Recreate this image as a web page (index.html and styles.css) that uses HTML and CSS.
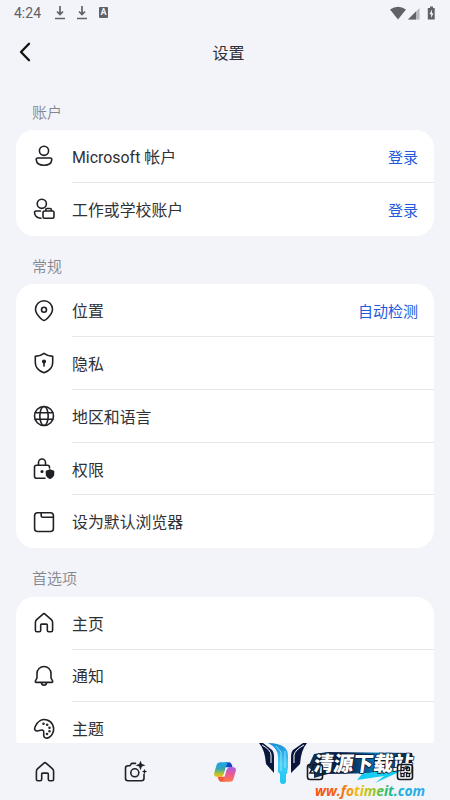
FILE: index.html
```html
<!DOCTYPE html>
<html lang="zh-CN">
<head>
<meta charset="utf-8">
<title>设置</title>
<link rel="stylesheet" href="styles.css">
</head>
<body>
<div class="app">
  <div class="status">
    <span class="time">4:24</span>
    <svg class="dl" width="12" height="16" viewBox="0 0 12 16"><path d="M6 1v8M3 6.500 6 9.500 9 6.500M1 13.500h10" /></svg>
    <svg class="dl" width="12" height="16" viewBox="0 0 12 16"><path d="M6 1v8M3 6.500 6 9.500 9 6.500M1 13.500h10" /></svg>
    <span class="abox">A</span>
    <svg class="signals" width="48" height="16" viewBox="0 0 48 16"><path d="M0 4.500Q8 -1 16 4.500L8 14.500Z"/><path d="M29.500 3v11.500H18Z" opacity=".4"/><path d="M26 6.500v8h-8Z"/><path d="M40 3V1.500h3V3h1.700v11.500h-6.900V3Z"/><path d="m42 4.500-2.600 4.700h1.700V13l2.400-4.800h-1.600Z" fill="#f3f4f9"/></svg>
  </div>
  <header class="header">
    <svg class="back" width="12" height="20" viewBox="0 0 12 20"><path d="M10 1.800 2 10l8 8.200"/></svg>
    <h1>设置</h1>
  </header>
  <main class="content">
    <h2>账户</h2>
    <section class="card">
      <div class="row"><svg class="icon" viewBox="0 0 24 24"><circle cx="12" cy="6.800" r="4.600"/><path d="M5.700 14h12.600c1 0 1.600.7 1.500 1.600-.3 3.600-3.500 5.600-7.800 5.600s-7.500-2-7.800-5.600c-.1-.9.500-1.600 1.500-1.600Z"/></svg><div class="line"><span>Microsoft 帐户</span><a>登录</a></div></div>
      <div class="row"><svg class="icon" viewBox="0 0 24 24"><circle cx="9.800" cy="6.800" r="4.600"/><path d="M8.500 14H4c-1 0-1.600.7-1.500 1.600.3 3.200 3 5.400 6.500 5.600M13 14h7.500q1.500 0 1.500 1.500v4.300q0 1.500-1.500 1.500h-8q-1.500 0-1.500-1.500v-4.300Q11 14 13 14ZM13.800 14v-1.500q0-1 1-1h3.500q1 0 1 1V14"/></svg><div class="line"><span>工作或学校账户</span><a>登录</a></div></div>
    </section>
    <h2>常规</h2>
    <section class="card">
      <div class="row"><svg class="icon" viewBox="0 0 24 24"><path d="M12 21.500c-1 0-8.500-5.700-8.500-11.300a8.500 8.500 0 0 1 17 0c0 5.600-7.500 11.300-8.500 11.300Z"/><circle cx="12" cy="10.800" r="2.500"/></svg><div class="line"><span>位置</span><a>自动检测</a></div></div>
      <div class="row"><svg class="icon" viewBox="0 0 24 24"><path d="M12 2.400c2.500 2 5 2.800 8.700 3v6c0 5.200-3.200 8.300-8.700 10.400-5.500-2.100-8.700-5.200-8.700-10.400v-6c3.700-.2 6.200-1 8.700-3Z"/><path d="M12 11v4"/><circle class="solid" cx="12" cy="10.500" r="1.300"/></svg><div class="line"><span>隐私</span></div></div>
      <div class="row"><svg class="icon" viewBox="0 0 24 24"><circle cx="12" cy="12" r="9.500"/><ellipse cx="12" cy="12" rx="4.200" ry="9.500"/><path d="M3.300 8.800h17.400M3.300 15.200h17.400"/></svg><div class="line"><span>地区和语言</span></div></div>
      <div class="row"><svg class="icon" viewBox="0 0 24 24"><path d="M13 21.300H4.500q-2 0-2-2v-9q0-2 2-2h11q2 0 2 2v.7M6.500 8.300V5.500a3.500 3.500 0 0 1 7 0v2.800"/><circle class="solid" cx="10" cy="14.500" r=".8"/><path class="solid" d="M18 13q1.600 1.200 3.500 1.200v2.500q0 3-3.500 4.500-3.500-1.500-3.500-4.500v-2.500q1.900 0 3.500-1.200Z"/></svg><div class="line"><span>权限</span></div></div>
      <div class="row"><svg class="icon" viewBox="0 0 24 24"><rect x="2.600" y="2.700" width="18.800" height="18.800" rx="3"/><path d="M9.200 2.700v2.800q0 1.700 1.700 1.700h10.500"/></svg><div class="line"><span>设为默认浏览器</span></div></div>
    </section>
    <h2>首选项</h2>
    <section class="card">
      <div class="row"><svg class="icon" viewBox="0 0 24 24"><path d="M10.700 3.300q1.300-1.200 2.600 0l6 5.400q1.300 1.200 1.300 2.800v7.800q0 1.500-1.500 1.500h-2.300q-1.500 0-1.500-1.500v-5.200q0-1-1-1h-4.600q-1 0-1 1v5.200q0 1.500-1.500 1.500H4.900q-1.500 0-1.500-1.500v-7.800q0-1.600 1.300-2.800Z"/></svg><div class="line"><span>主页</span></div></div>
      <div class="row"><svg class="icon" viewBox="0 0 24 24"><path d="M12 2.500a7 7 0 0 1 7 7v4.300l1.600 3.200q.5 1.400-1 1.400H4.400q-1.500 0-1-1.400L5 13.800V9.500a7 7 0 0 1 7-7ZM9.400 18.600a2.600 2.600 0 0 0 5.200 0"/></svg><div class="line"><span>通知</span></div></div>
      <div class="row"><svg class="icon" viewBox="0 0 24 24"><path d="M3 10C5.500 4.300 10.200 1.500 15 3c5.400 1.700 8 7.300 5.900 12.800-1.500 4.200-5.500 6.200-8 4.800-3-1.700.5-5.900-2-7.300-1.800-1-3.500.4-5.200.7C3.200 14.300 2 12.500 3 10Z"/><g class="solid"><circle cx="11.500" cy="6.800" r=".5"/><circle cx="15.200" cy="7.700" r=".5"/><circle cx="17.500" cy="10.700" r=".5"/><circle cx="17.500" cy="14.300" r=".5"/><circle cx="15" cy="17" r=".5"/></g></svg><div class="line"><span>主题</span></div></div>
    </section>
  </main>
  <nav class="tabs">
    <svg class="icon" viewBox="0 0 24 24"><path d="M10.700 3.300q1.300-1.200 2.600 0l6 5.400q1.300 1.200 1.300 2.800v7.800q0 1.500-1.500 1.500h-2.300q-1.500 0-1.500-1.500v-5.200q0-1-1-1h-4.600q-1 0-1 1v5.200q0 1.500-1.500 1.500H4.900q-1.500 0-1.500-1.500v-7.800q0-1.600 1.300-2.800Z"/></svg>
    <svg class="icon" viewBox="0 0 24 24"><path d="M12.500 3.400H9.300q-1 0-1.500.9l-.9 1.500H5q-2.500 0-2.500 2.500v10q0 2.500 2.500 2.500h13.500q2.500 0 2.500-2.500v-4"/><circle cx="11.800" cy="12.800" r="4"/><path class="solid" stroke="none" d="M17.500.8 18.900 4l3.600 1.300-3.600 1.300-1.400 3.600-1.400-3.600-3.600-1.300L16.100 4ZM21.500 9l.8 1.800 1.800.8-1.800.7-.8 1.900-.8-1.900-1.800-.7 1.800-.8Z"/></svg>
    <svg class="copilot" width="24" height="24" viewBox="0 0 24 24">
      <defs>
        <linearGradient id="cool" x1="0" y1="0" x2="0" y2="1"><stop stop-color="#18a7ed"/><stop offset=".45" stop-color="#35a5b4"/><stop offset=".8" stop-color="#b6c52e"/><stop offset="1" stop-color="#f4bd14"/></linearGradient>
        <linearGradient id="warm" x1="0" y1="0" x2="0" y2="1"><stop stop-color="#a65bea"/><stop offset=".5" stop-color="#ed5d90"/><stop offset="1" stop-color="#ff7846"/></linearGradient>
      </defs>
      <path d="M12 2.200h4q2 0 2.700 2.200l1 3.100h-7Z" fill="#1745c6"/>
      <path d="M12 21.800H8.200q-2 0-2.600-2l-1.100-3.300h7Z" fill="#f15a35"/>
      <path d="M7 2.200h9q-1.800.4-2.500 3l-2.300 8q-.9 3.600-3.700 3.600H3.700Q.5 16.800 1.200 13l2.200-7.500Q4.300 2.200 7 2.200Z" fill="url(#cool)"/>
      <path d="M17 21.800H8q1.800-.4 2.500-3l2.300-8q.9-3.600 3.700-3.600h3.800q3.200 0 2.500 3.800l-2.200 7.500q-.9 3.300-3.600 3.300Z" fill="url(#warm)"/>
      <path d="M12.800 7.400h3q-1.900.8-2.500 3L11.700 16.600H9q1.400-.8 2.200-3.400Z" fill="#f7f5f8"/>
    </svg>
  </nav>
  <svg class="mark" width="190" height="62" viewBox="258 738 190 62">
    <defs>
      <linearGradient id="wing" x1="0" y1="0" x2="0" y2="1"><stop stop-color="#168edb"/><stop offset=".5" stop-color="#45cbf7"/><stop offset="1" stop-color="#19c8ef"/></linearGradient>
      <linearGradient id="plate"><stop stop-color="#123354"/><stop offset=".35" stop-color="#061b46"/><stop offset=".65" stop-color="#0879b9"/><stop offset="1" stop-color="#101a30"/></linearGradient>
      <linearGradient id="site"><stop stop-color="#f44b19"/><stop offset=".24" stop-color="#f56a15"/><stop offset=".38" stop-color="#f4bd13"/><stop offset=".52" stop-color="#a5c51b"/><stop offset=".65" stop-color="#25bc68"/><stop offset=".76" stop-color="#17b4d3"/><stop offset="1" stop-color="#37a5ee"/></linearGradient>
    </defs>
    <path d="M259 743h4l9 7q2 2 2 7v16l-8-9q-1-14-7-21Z" fill="#09163b"/>
    <path d="M262 745q9 5 9 10v8" fill="none" stroke="#f3f7fc" stroke-width="1"/>
    <path d="M307 743h-4l-10 7q-2 2-2 7v16l9-9q1-14 7-21Z" fill="#09163b"/>
    <path d="M304 745q-9 5-10 10v8" fill="none" stroke="#f3f7fc" stroke-width="1"/>
    <path d="M268 743q10 0 16 4 4 3 4 9v11l-1 7h-1v7q0 3-3 3t-3-3v-7l-2-2v-15q0-9-10-14Z" fill="url(#wing)"/>
    <path d="m276 746 5 6v19M285 751v17" fill="none" stroke="#a5edff" stroke-width=".8"/>
    <path d="m314 754 14-2 84 1 1 5-3 11-28 4-54 1-14 4v-6l-6-5Z" fill="url(#plate)"/>
    <path d="m362 774 29-5 24-6-18 10-22 10 9-7-27 4Z" fill="#16cef3"/>
    <text class="brand" x="0" y="0" transform="translate(313 770.500) skewX(-8)" textLength="99" lengthAdjust="spacingAndGlyphs">清源下载站</text>
    <g fill="none" stroke="#17191f" stroke-width="1.600"><rect x="307.500" y="764.500" width="15" height="15" rx="2.500"/><path d="M314 765l-4 8h5"/><rect x="397.500" y="764.500" width="15" height="15" rx="2.500"/></g>
    <g fill="none" stroke="#17191f" stroke-width="1.300"><rect x="401" y="767.500" width="3" height="3"/><rect x="406.500" y="767.500" width="3" height="3"/><rect x="401" y="773.500" width="3" height="3"/><rect x="406.500" y="773.500" width="3" height="3"/></g>
    <text class="site" x="315" y="796" textLength="110" lengthAdjust="spacingAndGlyphs">ww.fotimeit.com</text>
  </svg>
</div>
</body>
</html>
```

FILE: styles.css
```css
* { box-sizing: border-box; }
body { margin: 0; background: #f3f4f9; color: #303135; font-family: Roboto, "Noto Sans CJK SC", sans-serif; }
.app { position: relative; width: 450px; height: 800px; overflow: hidden; display: flex; flex-direction: column; }
.status { height: 25px; flex: none; display: flex; align-items: center; padding: 0 14px; color: #606268; }
.time { width: 28px; font-size: 14px; margin-right: 12px; }
.dl { margin-right: 10px; fill: none; stroke: #606268; stroke-width: 1.7; }
.abox { width: 9px; height: 11px; border-radius: 1px; background: #606268; color: #f3f4f9; font: 700 9px/11px Roboto, sans-serif; text-align: center; margin-left: 1px; }
.signals { margin-left: auto; margin-right: -2px; fill: #606268; }
.header { height: 54px; flex: none; display: grid; grid-template-columns: 60px 1fr 53px; align-items: center; }
.back { margin-left: 19px; fill: none; stroke: #111; stroke-width: 2.3; stroke-linecap: round; stroke-linejoin: round; }
h1 { margin: 0; padding-bottom: 1px; font-size: 16px; font-weight: 400; text-align: center; }
.content { height: 664px; flex: none; padding: 0 16px; overflow: hidden; }
h2 { margin: 0; height: 48.4px; padding: 18px 16px 0; font-size: 15px; font-weight: 350; line-height: 26px; color: #85878f; }
h2:first-child { height: 51px; padding-top: 21px; }
.card { background: #fff; border-radius: 18px; overflow: hidden; }
.row { height: 52.85px; display: flex; align-items: center; }
.icon { width: 24px; height: 24px; flex: none; fill: none; stroke: #202126; stroke-width: 1.6; stroke-linejoin: round; stroke-linecap: round; }
.row .icon { margin: 0 16px; }
.icon .solid { fill: #202126; }
.line { height: 100%; flex: 1; display: flex; align-items: center; justify-content: space-between; padding: 1px 16px 0 0; border-bottom: 1px solid #e7e8eb; font-size: 15.9px; font-weight: 400; }
.row:last-child .line { border-bottom-color: transparent; }
.line a { color: #2459dc; font-size: 15px; }
.tabs { height: 57px; flex: none; display: grid; grid-template-columns: repeat(5, 90px); align-items: center; justify-items: center; }
.mark { position: absolute; left: 258px; top: 738px; overflow: visible; }
.brand { font: 900 20.5px "Noto Sans CJK SC", sans-serif; fill: white; stroke: #0a1a36; stroke-width: 1.6px; paint-order: stroke; }
.site { font: italic 700 14px "Open Sans", sans-serif; fill: url(#site); }
```
